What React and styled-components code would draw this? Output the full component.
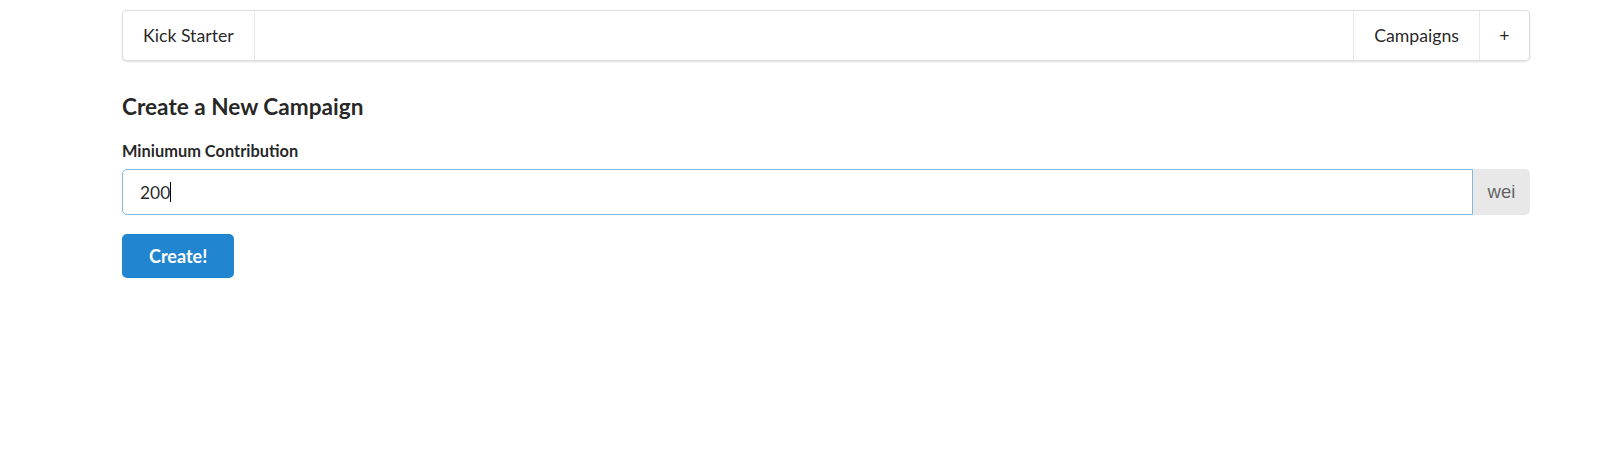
import React from "react";
import styled, { createGlobalStyle } from "styled-components";

const GlobalStyle = createGlobalStyle`
    body {
        margin: 0;
        background: #ffffff;
        font-family: Lato, "Open Sans", "Liberation Sans", sans-serif;
        color: rgba(0, 0, 0, 0.87);
    }
`;

export default function App() {
    return (
        <>
            <GlobalStyle />
            <Page>
                <Menu>
                    <MenuItem divider="right">Kick Starter</MenuItem>
                    <Spacer />
                    <MenuItem divider="left">Campaigns</MenuItem>
                    <MenuItem divider="left" narrow>
                        +
                    </MenuItem>
                </Menu>

                <Title>Create a New Campaign</Title>

                <Field>
                    <Label>Miniumum Contribution</Label>
                    <InputRow>
                        <InputBox>
                            <span>200</span>
                            <Caret />
                        </InputBox>
                        <Unit>wei</Unit>
                    </InputRow>
                </Field>

                <Button>Create!</Button>
            </Page>
        </>
    );
}

const Page = styled.div`
    width: 1408px;
    padding: 10px 0 0 122px;
    display: flex;
    flex-direction: column;
    align-items: flex-start;
`;

const Menu = styled.div`
    box-sizing: border-box;
    width: 100%;
    height: 51px;
    display: flex;
    align-items: stretch;
    background: #ffffff;
    border: 1px solid rgba(34, 36, 38, 0.15);
    border-radius: 5px;
    box-shadow: 0 1px 2px 0 rgba(34, 36, 38, 0.15);
`;

const MenuItem = styled.div`
    display: flex;
    align-items: center;
    justify-content: center;
    box-sizing: border-box;
    padding: 0 ${(props) => (props.narrow ? "0" : "20px")};
    width: ${(props) => (props.narrow ? "50px" : "auto")};
    font-size: 17.7px;
    color: rgba(0, 0, 0, 0.87);
    border-${(props) => props.divider}: 1px solid rgba(34, 36, 38, 0.1);
`;

const Spacer = styled.div`
    flex: 1;
`;

const Title = styled.h3`
    margin: 31px 0 0;
    font-size: 22.6px;
    line-height: 1.28571;
    font-weight: 700;
    color: rgba(0, 0, 0, 0.87);
`;

const Field = styled.div`
    width: 100%;
    margin-top: 19px;
`;

const Label = styled.div`
    font-size: 16.4px;
    line-height: 22.3px;
    font-weight: 700;
    color: rgba(0, 0, 0, 0.87);
    margin-bottom: 7px;
`;

const InputRow = styled.div`
    display: flex;
    height: 46px;
`;

const InputBox = styled.div`
    flex: 1;
    display: flex;
    align-items: center;
    box-sizing: border-box;
    padding-left: 17px;
    border: 1px solid #85b7d9;
    border-radius: 5px 0 0 5px;
    font-size: 17.4px;
    color: rgba(0, 0, 0, 0.87);
`;

const Caret = styled.span`
    display: inline-block;
    width: 1px;
    height: 20px;
    background: #000000;
`;

const Unit = styled.div`
    width: 57px;
    display: flex;
    align-items: center;
    justify-content: center;
    background: #e8e8e8;
    border-radius: 0 5px 5px 0;
    font-family: "Liberation Sans", Arial, sans-serif;
    font-size: 18.5px;
    color: rgba(0, 0, 0, 0.6);
`;

const Button = styled.button`
    margin-top: 19px;
    height: 44px;
    padding: 0 27px;
    border: none;
    border-radius: 5px;
    background: #2185d0;
    color: #ffffff;
    font-family: Lato, "Open Sans", sans-serif;
    font-size: 18px;
    font-weight: 700;
    cursor: pointer;
`;
